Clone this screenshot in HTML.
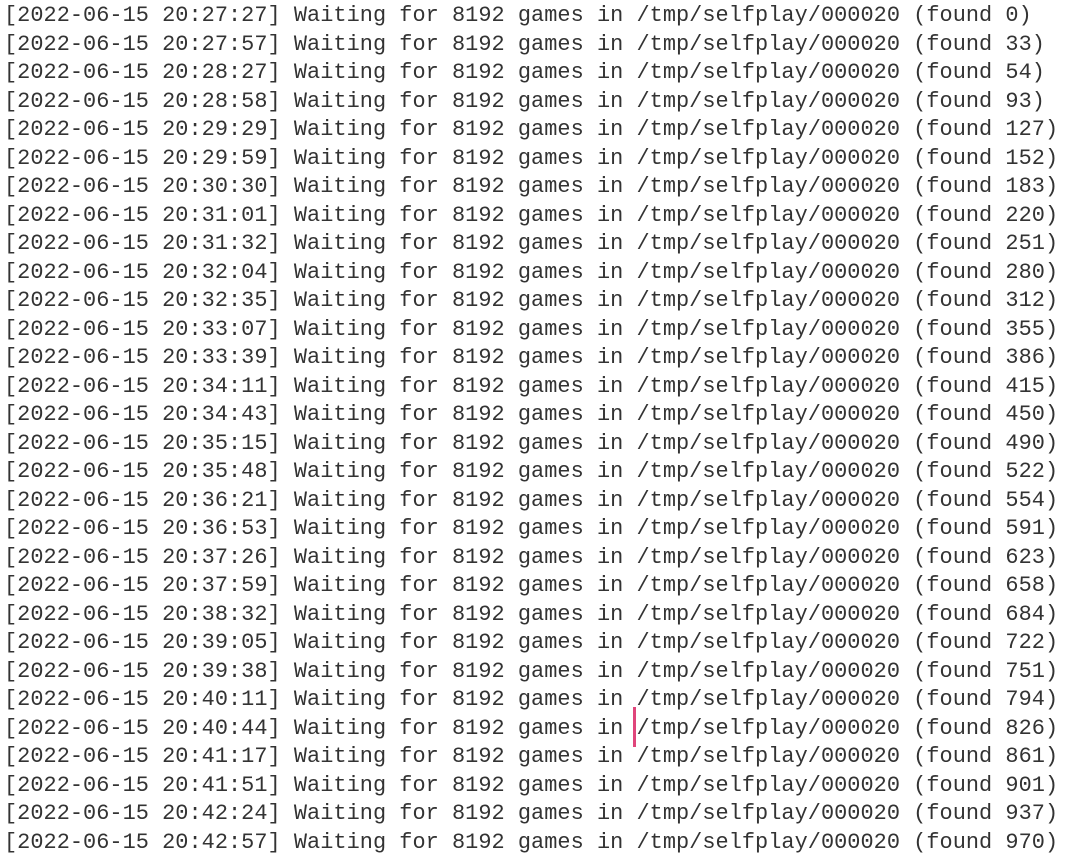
<!DOCTYPE html>
<html><head><meta charset="utf-8"><style>
html,body{margin:0;padding:0;background:#fff;width:1065px;height:856px;overflow:hidden}
pre{margin:0;position:absolute;left:4px;top:2px;font-family:"Liberation Mono",monospace;font-size:21.9px;letter-spacing:0.04px;line-height:28.52px;color:#333}
.cur{position:absolute;left:633px;top:707px;width:3px;height:40px;background:#e0457b}
</style></head><body>
<pre>[2022-06-15 20:27:27] Waiting for 8192 games in /tmp/selfplay/000020 (found 0)
[2022-06-15 20:27:57] Waiting for 8192 games in /tmp/selfplay/000020 (found 33)
[2022-06-15 20:28:27] Waiting for 8192 games in /tmp/selfplay/000020 (found 54)
[2022-06-15 20:28:58] Waiting for 8192 games in /tmp/selfplay/000020 (found 93)
[2022-06-15 20:29:29] Waiting for 8192 games in /tmp/selfplay/000020 (found 127)
[2022-06-15 20:29:59] Waiting for 8192 games in /tmp/selfplay/000020 (found 152)
[2022-06-15 20:30:30] Waiting for 8192 games in /tmp/selfplay/000020 (found 183)
[2022-06-15 20:31:01] Waiting for 8192 games in /tmp/selfplay/000020 (found 220)
[2022-06-15 20:31:32] Waiting for 8192 games in /tmp/selfplay/000020 (found 251)
[2022-06-15 20:32:04] Waiting for 8192 games in /tmp/selfplay/000020 (found 280)
[2022-06-15 20:32:35] Waiting for 8192 games in /tmp/selfplay/000020 (found 312)
[2022-06-15 20:33:07] Waiting for 8192 games in /tmp/selfplay/000020 (found 355)
[2022-06-15 20:33:39] Waiting for 8192 games in /tmp/selfplay/000020 (found 386)
[2022-06-15 20:34:11] Waiting for 8192 games in /tmp/selfplay/000020 (found 415)
[2022-06-15 20:34:43] Waiting for 8192 games in /tmp/selfplay/000020 (found 450)
[2022-06-15 20:35:15] Waiting for 8192 games in /tmp/selfplay/000020 (found 490)
[2022-06-15 20:35:48] Waiting for 8192 games in /tmp/selfplay/000020 (found 522)
[2022-06-15 20:36:21] Waiting for 8192 games in /tmp/selfplay/000020 (found 554)
[2022-06-15 20:36:53] Waiting for 8192 games in /tmp/selfplay/000020 (found 591)
[2022-06-15 20:37:26] Waiting for 8192 games in /tmp/selfplay/000020 (found 623)
[2022-06-15 20:37:59] Waiting for 8192 games in /tmp/selfplay/000020 (found 658)
[2022-06-15 20:38:32] Waiting for 8192 games in /tmp/selfplay/000020 (found 684)
[2022-06-15 20:39:05] Waiting for 8192 games in /tmp/selfplay/000020 (found 722)
[2022-06-15 20:39:38] Waiting for 8192 games in /tmp/selfplay/000020 (found 751)
[2022-06-15 20:40:11] Waiting for 8192 games in /tmp/selfplay/000020 (found 794)
[2022-06-15 20:40:44] Waiting for 8192 games in /tmp/selfplay/000020 (found 826)
[2022-06-15 20:41:17] Waiting for 8192 games in /tmp/selfplay/000020 (found 861)
[2022-06-15 20:41:51] Waiting for 8192 games in /tmp/selfplay/000020 (found 901)
[2022-06-15 20:42:24] Waiting for 8192 games in /tmp/selfplay/000020 (found 937)
[2022-06-15 20:42:57] Waiting for 8192 games in /tmp/selfplay/000020 (found 970)</pre>
<div class="cur"></div>
</body></html>
